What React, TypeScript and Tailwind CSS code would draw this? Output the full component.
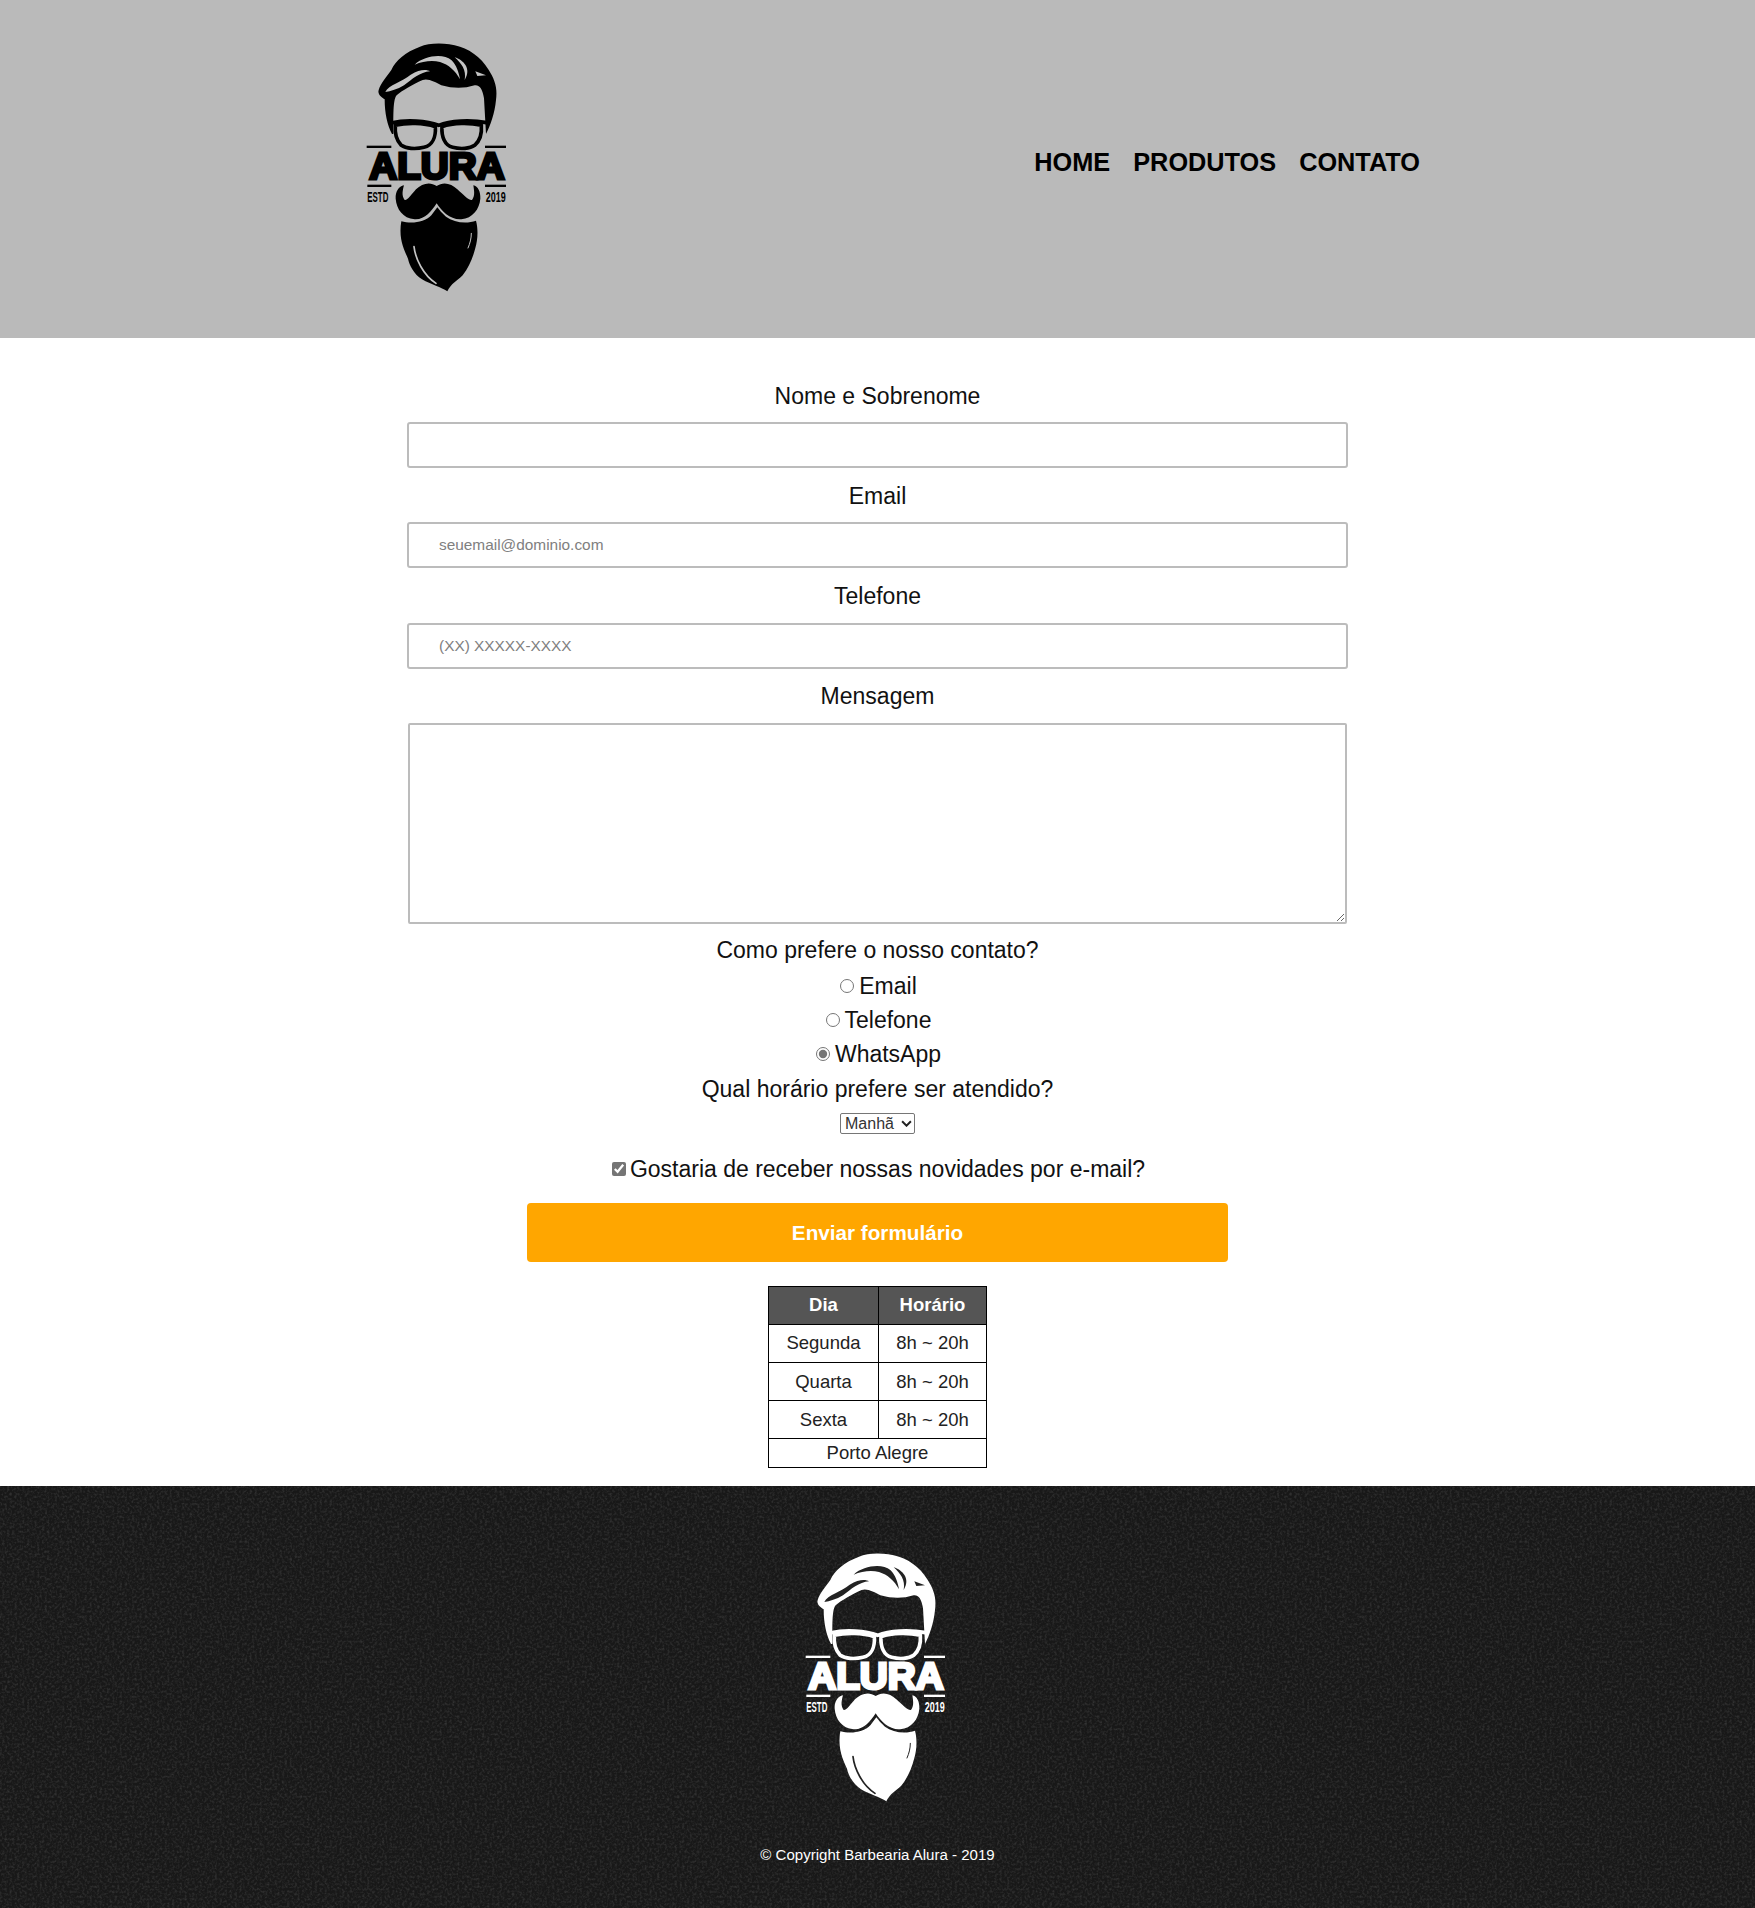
import React from "react";

// Logo traced at 3x (600x870), drawn at 200x290
const Logo = ({ fg, shine }: { fg: string; shine: string }) => (
  <svg viewBox="0 0 600 870" className="w-[200px] h-[290px] shrink-0">
    {/* hair */}
    <path
      fill={fg}
      d="M156 342C142 315 134 280 134 238C124 232 112 222 116 210C122 190 140 170 154 150C166 122 196 96 240 80C268 68 316 66 360 80C398 92 434 122 455 165C468 190 472 214 468 240C464 280 452 315 438 342L432 235C428 210 420 194 404 196C372 206 340 206 304 196C286 186 264 174 248 180C216 194 186 212 170 226C160 238 160 270 160 342Z"
    />
    <path fill={shine} d="M136 216C146 194 186 186 212 164C240 146 262 148 270 154C240 156 216 178 192 196C172 208 152 214 136 216Z" />
    <path fill={shine} d="M224 134C254 106 310 100 334 120C350 136 356 156 360 178C346 152 326 134 300 126C276 120 248 124 224 134Z" />
    <path fill={shine} d="M344 112C370 120 396 146 374 180C380 150 364 130 344 112Z" />
    <path fill={shine} d="M406 154L438 166L412 168Z" />
    {/* glasses */}
    <path
      fill="none"
      stroke={fg}
      strokeWidth="11"
      strokeLinejoin="round"
      d="M156 308C200 298 260 302 296 316C330 302 390 298 440 308M166 316C200 308 250 308 286 320C288 350 278 376 252 382C226 388 198 386 184 376C170 362 164 340 166 316ZM306 320C340 308 390 308 424 316C426 340 420 362 404 376C390 386 362 388 338 382C314 376 304 350 306 320Z"
    />
    {/* rules */}
    <rect x="80" y="377" width="74" height="7" fill={fg} />
    <rect x="435" y="377" width="63" height="7" fill={fg} />
    <rect x="82" y="494" width="72" height="7" fill={fg} />
    <rect x="435" y="494" width="63" height="7" fill={fg} />
    {/* wordmark */}
    <text
      x="88"
      y="477"
      textLength="406"
      lengthAdjust="spacingAndGlyphs"
      fill={fg}
      stroke={fg}
      strokeWidth="9"
      fontFamily="Liberation Sans, sans-serif"
      fontWeight="700"
      fontSize="112"
    >
      ALURA
    </text>
    <text x="82" y="545" textLength="63" lengthAdjust="spacingAndGlyphs" fill={fg} fontFamily="Liberation Sans, sans-serif" fontWeight="700" fontSize="42">
      ESTD
    </text>
    <text x="437" y="545" textLength="60" lengthAdjust="spacingAndGlyphs" fill={fg} fontFamily="Liberation Sans, sans-serif" fontWeight="700" fontSize="42">
      2019
    </text>
    {/* moustache */}
    <path
      fill={fg}
      d="M290 498C270 484 246 490 228 508C214 524 202 542 194 540C184 528 188 510 192 496C176 498 166 516 167 536C170 568 188 594 224 598C254 600 274 574 290 550C306 574 330 600 364 598C398 594 418 568 421 536C422 516 414 498 400 496C402 510 406 528 396 540C386 542 370 524 352 508C334 490 310 484 290 498Z"
    />
    {/* beard */}
    <path
      fill={fg}
      d="M184 604C214 612 254 608 274 586C280 578 286 570 292 562C298 570 306 580 318 590C342 608 380 612 408 602C416 632 412 664 406 684C398 716 386 742 368 766C352 782 332 792 322 814C304 802 274 794 246 778C222 762 208 736 204 716C196 696 174 660 184 604Z"
    />
    <path fill="none" stroke={shine} strokeWidth="5" strokeLinecap="round" d="M222 680C226 716 250 766 288 790" />
    <path fill="none" stroke={shine} strokeWidth="3" strokeLinecap="round" d="M394 640C394 656 390 670 384 684" />
  </svg>
);

const radios = [
  { label: "Email", checked: false },
  { label: "Telefone", checked: false },
  { label: "WhatsApp", checked: true },
];

const hours = ["Segunda", "Quarta", "Sexta"];

const labelClass = "text-[23px] leading-[28px] text-[#111] text-center";
const inputClass =
  "block w-[941px] h-[46px] bg-white border-2 border-[#bcbcbc] rounded-[3px] pl-[30px] text-[15.4px] text-[#333] placeholder:text-[#808080]";

const Field = ({ label, placeholder }: { label: string; placeholder?: string }) => (
  <div className="flex flex-col items-center gap-[12px] mb-[14px]">
    <label className={labelClass}>{label}</label>
    <input type="text" placeholder={placeholder} className={inputClass} />
  </div>
);

export default function App() {
  return (
    <div className="w-full min-h-[1908px] flex flex-col bg-white font-['Liberation_Sans',Arial,sans-serif]">
      <header className="h-[338px] bg-[#bababa] flex items-start justify-between pt-[20px] pl-[340px] pr-[335px]">
        <Logo fg="#000000" shine="#c4c4c4" />
        <nav className="flex gap-[23px] mt-[126px] text-[25.3px] leading-[32px] font-bold text-black">
          <a href="#">HOME</a>
          <a href="#">PRODUTOS</a>
          <a href="#">CONTATO</a>
        </nav>
      </header>

      <main className="flex flex-col items-center pt-[44px]">
        <Field label="Nome e Sobrenome" />
        <Field label="Email" placeholder="seuemail@dominio.com" />
        <div className="flex flex-col items-center gap-[13px] mb-[13px]">
          <label className={labelClass}>Telefone</label>
          <input type="text" placeholder="(XX) XXXXX-XXXX" className={inputClass} />
        </div>
        <label className={labelClass}>Mensagem</label>
        <textarea className="block w-[939px] h-[201px] mt-[13px] bg-white border-2 border-[#bcbcbc] rounded-[2px]" />

        <p className={`${labelClass} mt-[12px]`}>Como prefere o nosso contato?</p>
        <div className="flex flex-col items-center mt-[8px] gap-[6px] ml-[2px]">
          {radios.map((r) => (
            <label key={r.label} className="flex items-center gap-[5px] text-[23px] leading-[28px] text-[#111]">
              <input
                type="radio"
                name="contato"
                defaultChecked={r.checked}
                className="w-[14px] h-[14px] m-0 accent-[#757575]"
              />
              {r.label}
            </label>
          ))}
        </div>
        <p className={`${labelClass} mt-[7px]`}>Qual horário prefere ser atendido?</p>
        <div className="relative mt-[10px]">
          <select className="block h-[21px] w-[75px] pl-[4px] appearance-none text-[16px] leading-none text-[#333] bg-white border border-[#767676] rounded-[2px]">
            <option>Manhã</option>
          </select>
          <svg viewBox="0 0 10 6" className="absolute right-[3px] top-[7px] w-[11px] h-[7px]" fill="none" stroke="#222" strokeWidth="1.8">
            <path d="M1 1l4 4 4-4" />
          </svg>
        </div>
        <label className="flex items-center gap-[4px] mt-[21px] ml-[2px] text-[23px] leading-[28px] text-[#111]">
          <input type="checkbox" defaultChecked className="w-[14px] h-[14px] m-0 accent-[#757575]" />
          Gostaria de receber nossas novidades por e-mail?
        </label>
        <button className="mt-[20px] w-[701px] h-[59px] bg-[#ffa600] rounded-[4px] text-white font-bold text-[20.7px]">
          Enviar formulário
        </button>

        <table className="mt-[24px] w-[219px] border-collapse text-[18.5px] text-[#222] text-center">
          <thead>
            <tr className="h-[38px] bg-[#555] text-white">
              <th className="w-[110px] border border-black font-bold pb-[2px]">Dia</th>
              <th className="border border-black font-bold pb-[2px]">Horário</th>
            </tr>
          </thead>
          <tbody>
            {hours.map((d, i) => (
              <tr key={d} className="h-[38px]">
                <td className={i === 0 ? "border border-black pb-[2px]" : "border border-black"}>{d}</td>
                <td className={i === 0 ? "border border-black pb-[2px]" : "border border-black"}>8h ~ 20h</td>
              </tr>
            ))}
          </tbody>
          <tfoot>
            <tr className="h-[28px]">
              <td colSpan={2} className="border border-black">
                Porto Alegre
              </td>
            </tr>
          </tfoot>
        </table>
      </main>

      <footer className="relative mt-[18px] flex-1 flex flex-col items-center bg-[#181818] pt-[44px] overflow-hidden">
        <svg className="absolute inset-0 w-full h-full" aria-hidden="true">
          <filter id="grain">
            <feTurbulence type="fractalNoise" baseFrequency="0.4" numOctaves="2" seed="4" />
            <feColorMatrix values="0 0 0 0 0.4 0 0 0 0 0.4 0 0 0 0 0.4 0.4 0 0 0 -0.17" />
          </filter>
          <rect width="100%" height="100%" filter="url(#grain)" />
        </svg>
        <div className="relative flex flex-col items-center">
          <div className="ml-[3px]">
            <Logo fg="#ffffff" shine="#222222" />
          </div>
          <p className="mt-[25px] text-[15.05px] leading-[20px] text-white">© Copyright Barbearia Alura - 2019</p>
        </div>
      </footer>
    </div>
  );
}
